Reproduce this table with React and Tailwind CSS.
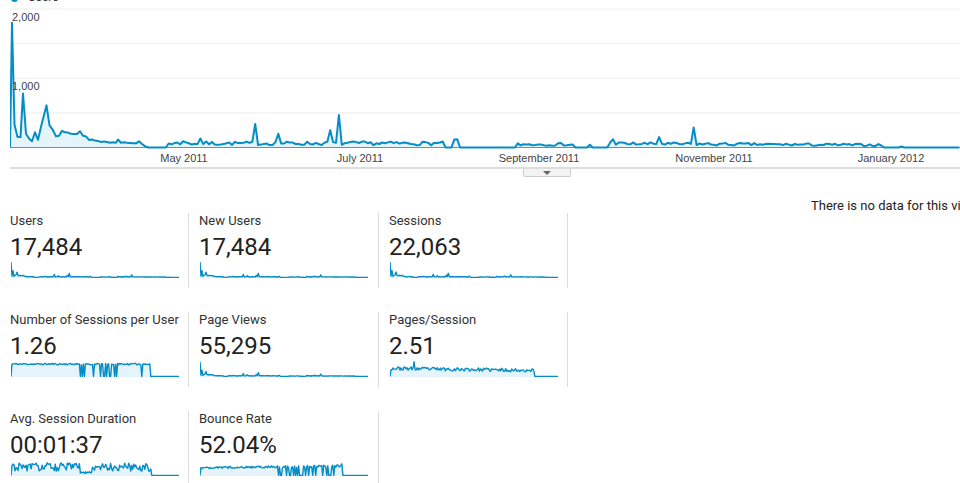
import React from "react";

const BLUE = "#058dc7";
const FILL = "#e5f3fa";

function makeRand(seed) {
  let a = seed;
  return () => {
    a |= 0;
    a = (a + 0x6d2b79f5) | 0;
    let t = Math.imul(a ^ (a >>> 15), 1 | a);
    t = (t + Math.imul(t ^ (t >>> 7), 61 | t)) ^ t;
    return ((t ^ (t >>> 14)) >>> 0) / 4294967296;
  };
}

// page-x / users pairs for the busy first weeks
const head = [
  [10, 0], [12, 1800], [14.5, 330], [17.5, 150], [20.5, 150], [23, 780], [26, 200],
  [29, 130], [32, 90], [35, 220], [38, 110], [41, 300], [46.5, 610], [49.5, 320],
  [53, 250], [56, 160], [59, 170], [62, 240], [65, 220], [68, 215], [71, 200],
  [74, 195], [77, 195], [80, 235], [83, 170], [86, 160], [89, 110], [92, 115],
  [95, 100], [98, 95], [101, 80], [104, 85], [107, 80], [110, 70], [113, 75],
  [116, 70], [118, 115], [121, 70], [124, 75], [127, 70], [130, 65], [133, 60],
  [136, 60], [139, 90], [142, 50], [145, 20], [148, 0],
];

const spikes = [
  [182, 90], [199, 130], [254, 340], [277, 200], [331, 250], [340, 470], [456, 120],
  [590, 40], [613, 120], [660, 150], [693, 290], [902, 15],
];

function levelAt(x) {
  if (x < 167) return 0;
  if (x < 445) return 60;
  if (x < 452) return 0;
  if (x < 460) return 90;
  if (x < 517) return 0;
  if (x < 573) return 45;
  if (x < 610) return 0;
  if (x < 883) return 55 - (x - 610) * 0.07;
  return 0;
}

const mainPoints = (() => {
  const r = makeRand(7);
  const pts = head.map(([x, v]) => [x, v]);
  for (let i = 0; i < 340; i++) {
    const x = 10 + i * 2.885;
    if (x <= 149) continue;
    if (x > 962) break;
    const noise = 0.55 + 0.9 * r();
    const sp = spikes.find(([sx]) => Math.abs(sx - x) < 1.45);
    pts.push([x, sp ? sp[1] : levelAt(x) * noise]);
  }
  return pts;
})();

function binMax(points, n, max) {
  const x0 = 10, x1 = 960;
  const out = [];
  for (let k = 0; k < n; k++) {
    const a = x0 + ((x1 - x0) * k) / n;
    const b = x0 + ((x1 - x0) * (k + 1)) / n;
    let m = 0;
    points.forEach(([x, v]) => {
      if (x >= a && x < b && v > m) m = v;
    });
    out.push(Math.min(1, m / max));
  }
  return out;
}

const usersSpark = binMax(mainPoints, 168, 1800);
const sessionsSpark = binMax(mainPoints, 168, 1750);
const viewsSpark = binMax(mainPoints, 168, 1900);

const perUserSpark = (() => {
  const r = makeRand(11);
  return Array.from({ length: 168 }, (_, k) => {
    if (k === 0 || k > 141) return 0;
    if (k >= 69 && k <= 108 && r() < 0.35) return 0;
    if (k >= 128 && r() < 0.3) return 0;
    return 0.8 + (r() - 0.5) * 0.1;
  });
})();

const pagesSpark = (() => {
  const r = makeRand(23);
  return Array.from({ length: 168 }, (_, k) => {
    if (k === 0 || k > 143) return 0;
    if (k === 24) return 0.95;
    return 0.52 - k * 0.0009 + (r() - 0.5) * 0.22;
  });
})();

const durationSpark = (() => {
  const r = makeRand(31);
  return Array.from({ length: 168 }, (_, k) => {
    if (k === 0 || k > 139) return 0;
    if (k >= 69 && k <= 80) return 0.12 + r() * 0.12;
    return 0.55 + (r() - 0.5) * 0.55;
  });
})();

const bounceSpark = (() => {
  const r = makeRand(47);
  return Array.from({ length: 168 }, (_, k) => {
    if (k === 0 || k > 141) return 0;
    if (k === 141) return 0.75;
    if (k >= 74 && k <= 134 && r() < 0.3) return 0;
    return 0.5 + k * 0.0008 + (r() - 0.5) * 0.14;
  });
})();

function Sparkline({ values }) {
  const w = 168;
  const h = 17;
  const step = w / (values.length - 1);
  const line = values.map((v, i) => `${(i * step).toFixed(1)},${(16.4 - v * 15.4).toFixed(1)}`).join(" ");
  return (
    <svg width={w} height={h} className="block">
      <polygon points={`0,${h} ${line} ${w},${h}`} fill={FILL} />
      <polyline points={line} fill="none" stroke={BLUE} strokeWidth="1.4" strokeLinejoin="round" />
    </svg>
  );
}

const metrics = [
  { label: "Users", value: "17,484", spark: usersSpark },
  { label: "New Users", value: "17,484", spark: usersSpark },
  { label: "Sessions", value: "22,063", spark: sessionsSpark },
  { label: "Number of Sessions per User", value: "1.26", spark: perUserSpark },
  { label: "Page Views", value: "55,295", spark: viewsSpark },
  { label: "Pages/Session", value: "2.51", spark: pagesSpark },
  { label: "Avg. Session Duration", value: "00:01:37", spark: durationSpark },
  { label: "Bounce Rate", value: "52.04%", spark: bounceSpark },
];

function MetricCard({ label, value, spark }) {
  return (
    <div className="h-[75px] pl-[10px] border-r border-[#dcdcdc] flex flex-col">
      <div className="text-[13px] leading-[16px] text-[#333] whitespace-nowrap">{label}</div>
      <div className="text-[24px] leading-[28px] text-[#222] mt-[4px]">{value}</div>
      <div className="pl-[1px]">
        <Sparkline values={spark} />
      </div>
    </div>
  );
}

function OverviewChart() {
  const top = 2;
  const y = (v) => 147.5 - top - (v * 138.5) / 2000;
  const pts = mainPoints.map(([x, v]) => `${(x - 10).toFixed(1)},${y(v).toFixed(1)}`).join(" ");
  const base = y(0);
  const grid = [2000, 1500, 1000, 500];
  const months = [
    ["May 2011", 184],
    ["July 2011", 360],
    ["September 2011", 539],
    ["November 2011", 714],
    ["January 2012", 891],
  ];
  return (
    <svg width="950" height="165" className="block" style={{ fontFamily: '"Liberation Sans", Arial, sans-serif' }}>
      {grid.map((g) => (
        <line key={g} x1="0" x2="950" y1={y(g)} y2={y(g)} stroke="#eeeeee" strokeWidth="1" />
      ))}
      <polygon points={`0,${base} ${pts} 950,${base}`} fill={FILL} />
      <line x1="0" x2="950" y1={base} y2={base} stroke="#888" strokeWidth="1" />
      <polyline points={pts} fill="none" stroke={BLUE} strokeWidth="2" strokeLinejoin="round" />
      <text x="2" y={y(2000) + 12} fontSize="11" fill="#444">2,000</text>
      <text x="2" y={y(1000) + 12} fontSize="11" fill="#444">1,000</text>
      {months.map(([m, x]) => (
        <text key={m} x={x - 10} y={162 - top} fontSize="11" fill="#444" textAnchor="middle">
          {m}
        </text>
      ))}
    </svg>
  );
}

export default function App() {
  return (
    <div
      className="w-[960px] h-[483px] overflow-hidden bg-white"
      style={{ fontFamily: "Roboto, 'Liberation Sans', Arial, sans-serif" }}
    >
      <div className="pl-[10px]">
        <div className="-mt-[8px] h-[10px] flex items-start pl-[1px]">
          <span className="w-[7px] h-[7px] rounded-full bg-[#058dc7] mt-[3px]" />
          <span className="text-[12px] leading-[10px] text-[#333] ml-[10px]">Users</span>
        </div>
        <OverviewChart />
        <div className="h-[2px] bg-[#dddddd]" />
        <div className="ml-[513px] w-[48px] h-[8px] bg-[#f3f3f3] border border-t-0 border-[#cccccc] rounded-b-[2px] flex items-center justify-center">
          <span className="w-0 h-0 border-l-[4px] border-r-[4px] border-t-[4px] border-l-transparent border-r-transparent border-t-[#666]" />
        </div>
      </div>
      <div className="flex">
        <div className="w-[801px] shrink-0 pt-[36px]">
          <div className="grid grid-cols-[189px_190px_189px] gap-y-[24px]">
            {metrics.map((m) => (
              <MetricCard key={m.label} {...m} />
            ))}
          </div>
        </div>
        <div className="pt-[21px] pl-[10px] whitespace-nowrap text-[13px] leading-[16px] text-[#222]">
          There is no data for this view.
        </div>
      </div>
    </div>
  );
}
